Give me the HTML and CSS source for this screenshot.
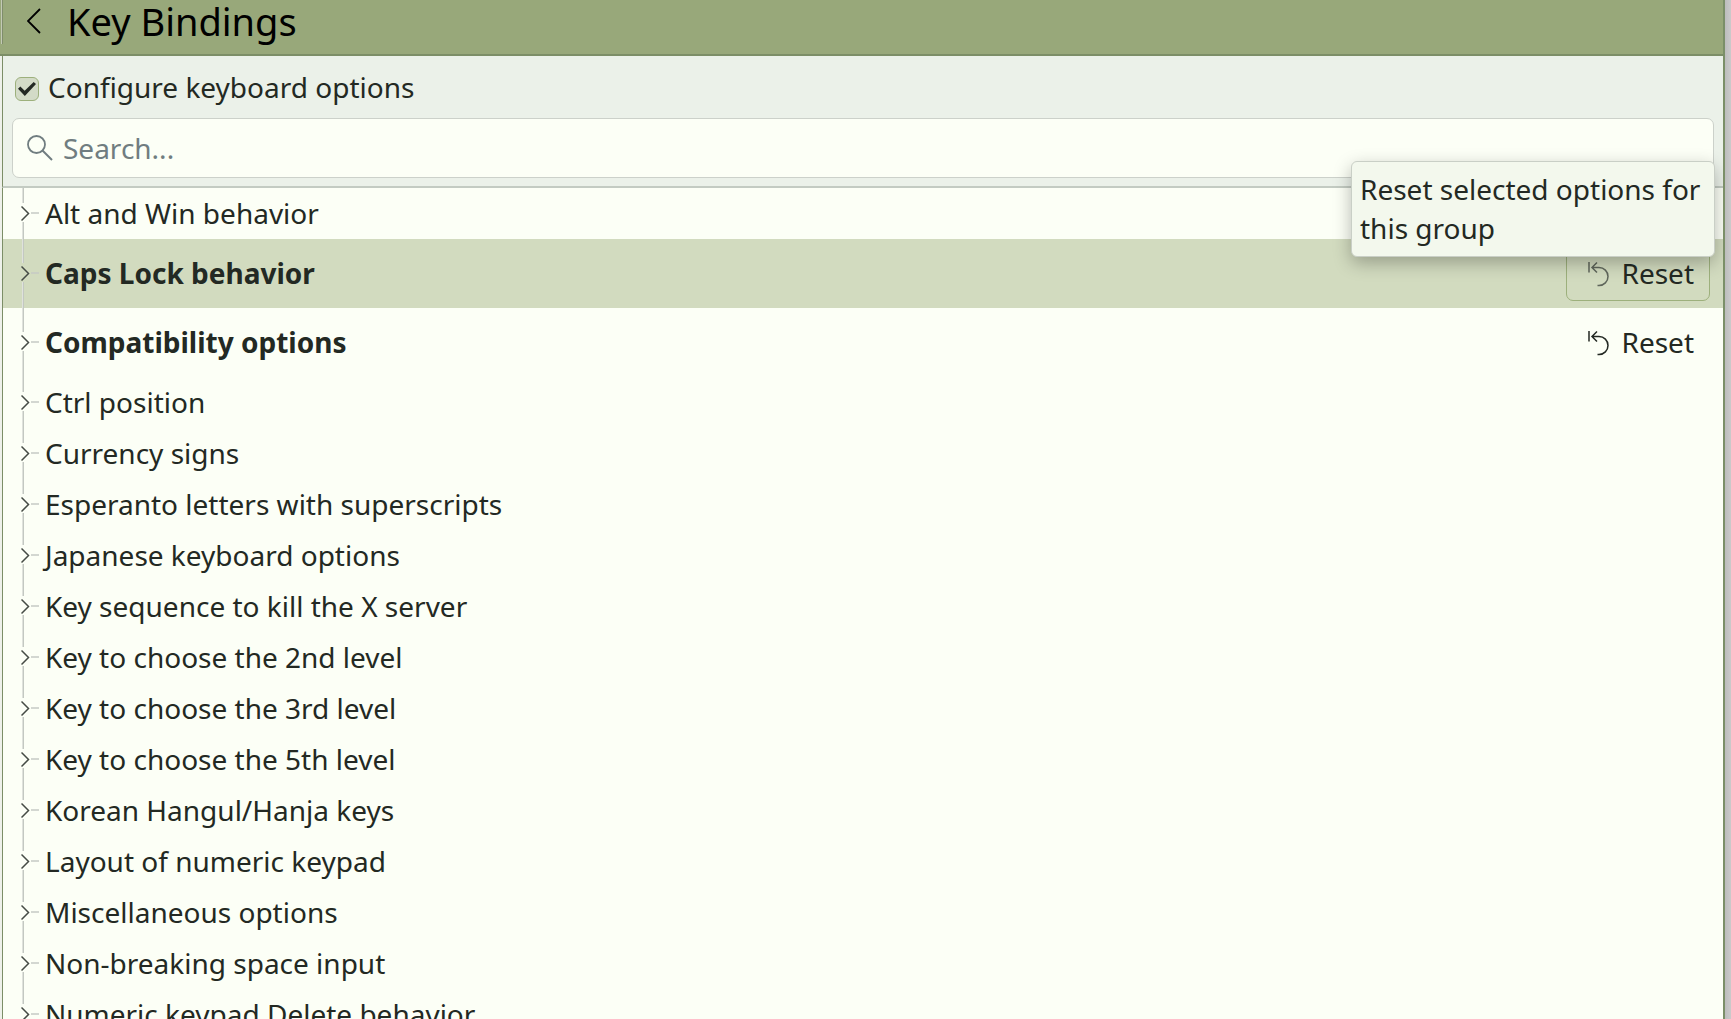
FILE: index.html
```html
<!DOCTYPE html>
<html lang="en">
<head>
<meta charset="utf-8">
<title>Key Bindings</title>
<link rel="stylesheet" href="styles.css">
</head>
<body>
<svg class="defs" aria-hidden="true">
  <symbol id="branch" viewBox="0 0 18 19">
    <path d="M0.5 3.5 L7.5 10.5 L0.5 17.5" fill="none" stroke="#454b45" stroke-width="1.500"/>
    <path d="M10 10 H18" stroke="#c6cac4" stroke-width="1.500"/>
  </symbol>
  <symbol id="undo" viewBox="0 0 22 26">
    <path d="M1 1 V11.500 M9 1.500 L4 6.500 L9 11.500 M4.500 6.500 H11 A9 9 0 0 1 11 24.500 H9.500" fill="none" stroke="currentColor" stroke-width="1.500"/>
  </symbol>
</svg>
<div class="window">
  <header class="titlebar">
    <button class="back" type="button" aria-label="Back">
      <svg width="14" height="26" viewBox="0 0 14 26"><path d="M13 1 L1 13 L13 25" fill="none" stroke="#000" stroke-width="1.800"/></svg>
    </button>
    <h1 class="title">Key Bindings</h1>
  </header>
  <div class="toolbar">
    <label class="option"><input class="check" type="checkbox" checked>Configure keyboard options</label>
    <div class="search">
      <svg width="26" height="26" viewBox="0 0 26 26"><circle cx="9.500" cy="9.500" r="8.500" fill="none" stroke="#707d80" stroke-width="1.800"/><path d="M15.500 15.500 L25 25" stroke="#707d80" stroke-width="2"/></svg>
      <input class="search-input" type="text" placeholder="Search..." aria-label="Search">
    </div>
  </div>
  <main class="content">
    <ul class="tree">
      <li class="row"><button class="expander" type="button" aria-label="Expand"><svg width="18" height="19"><use href="#branch"/></svg></button>Alt and Win behavior</li>
      <li class="row changed selected"><button class="expander" type="button" aria-label="Expand"><svg width="18" height="19"><use href="#branch"/></svg></button>Caps Lock behavior
        <div class="actions">
          <button class="reset hovered" type="button" aria-describedby="reset-tip"><svg width="22" height="26"><use href="#undo"/></svg>Reset</button>
          <div class="tooltip" id="reset-tip" role="tooltip">Reset selected options for this group</div>
        </div>
      </li>
      <li class="row changed"><button class="expander" type="button" aria-label="Expand"><svg width="18" height="19"><use href="#branch"/></svg></button>Compatibility options
        <div class="actions">
          <button class="reset" type="button"><svg width="22" height="26"><use href="#undo"/></svg>Reset</button>
        </div>
      </li>
      <li class="row"><button class="expander" type="button" aria-label="Expand"><svg width="18" height="19"><use href="#branch"/></svg></button>Ctrl position</li>
      <li class="row"><button class="expander" type="button" aria-label="Expand"><svg width="18" height="19"><use href="#branch"/></svg></button>Currency signs</li>
      <li class="row"><button class="expander" type="button" aria-label="Expand"><svg width="18" height="19"><use href="#branch"/></svg></button>Esperanto letters with superscripts</li>
      <li class="row"><button class="expander" type="button" aria-label="Expand"><svg width="18" height="19"><use href="#branch"/></svg></button>Japanese keyboard options</li>
      <li class="row"><button class="expander" type="button" aria-label="Expand"><svg width="18" height="19"><use href="#branch"/></svg></button>Key sequence to kill the X server</li>
      <li class="row"><button class="expander" type="button" aria-label="Expand"><svg width="18" height="19"><use href="#branch"/></svg></button>Key to choose the 2nd level</li>
      <li class="row"><button class="expander" type="button" aria-label="Expand"><svg width="18" height="19"><use href="#branch"/></svg></button>Key to choose the 3rd level</li>
      <li class="row"><button class="expander" type="button" aria-label="Expand"><svg width="18" height="19"><use href="#branch"/></svg></button>Key to choose the 5th level</li>
      <li class="row"><button class="expander" type="button" aria-label="Expand"><svg width="18" height="19"><use href="#branch"/></svg></button>Korean Hangul/Hanja keys</li>
      <li class="row"><button class="expander" type="button" aria-label="Expand"><svg width="18" height="19"><use href="#branch"/></svg></button>Layout of numeric keypad</li>
      <li class="row"><button class="expander" type="button" aria-label="Expand"><svg width="18" height="19"><use href="#branch"/></svg></button>Miscellaneous options</li>
      <li class="row"><button class="expander" type="button" aria-label="Expand"><svg width="18" height="19"><use href="#branch"/></svg></button>Non-breaking space input</li>
      <li class="row"><button class="expander" type="button" aria-label="Expand"><svg width="18" height="19"><use href="#branch"/></svg></button>Numeric keypad Delete behavior</li>
    </ul>
  </main>
</div>
</body>
</html>
```
FILE: styles.css
```css
* { box-sizing: border-box; }

body {
  margin: 0;
  height: 100vh;
  overflow: hidden;
  display: flex;
  padding-right: 6px;
  background: linear-gradient(to left, #cacaca, #bdbdbd 6px);
  color: #232923;
  font: 28px/39px "Noto Sans", sans-serif;
}

button, input { font: inherit; color: inherit; }
button { background: none; border: 0; padding: 0; }
svg { display: block; flex: none; }
.defs { position: absolute; width: 0; height: 0; }

.window {
  flex: 1;
  height: 100%;
  overflow: hidden;
  border-right: 2px solid #7b8f68;
  background: #eef1ea;
}

.titlebar {
  display: flex;
  align-items: center;
  gap: 26px;
  padding: 1px 27px 13px;
  background:
    linear-gradient(to right, #c3cab5 1px, #7f8c6c 1px) 1px 0 / 2px 44px no-repeat,
    #98a87a;
  border-bottom: 2px solid #7c8e67;
}
.title { margin: 0; font-size: 38px; line-height: 40px; font-weight: 400; color: #000; }

.toolbar, .content { margin-left: 2px; border-left: 1px solid #7c8e67; }

.toolbar {
  display: flex;
  flex-direction: column;
  gap: 11px;
  padding: 12px 9px 8px;
  border-bottom: 2px solid #c3cbc2;
  background: #ebf1e9;
}
.option { display: flex; align-items: center; gap: 9px; padding-left: 3px; }

.check {
  appearance: none;
  width: 24px;
  height: 24px;
  margin: 3px 0 0;
  border: 1px solid #9db07c;
  border-radius: 6px;
  background: #d3dbc7;
  display: grid;
  place-items: center;
}
.check:checked::before {
  content: "";
  width: 18px;
  height: 14px;
  background: #232923;
  clip-path: polygon(0 48%, 13% 32%, 37% 62%, 87% 0, 100% 14%, 38% 100%);
}

.search {
  display: flex;
  align-items: center;
  gap: 10px;
  height: 60px;
  padding: 0 14px;
  border: 1px solid #ccd1ca;
  border-radius: 7px;
  background: #fcfff6;
}
.search-input { flex: 1; min-width: 0; border: 0; padding: 0; background: none; outline: 0; }
.search-input::placeholder { color: #707d80; opacity: 1; }

.content { background: #fcfff6; }
.tree { margin: 0; padding: 0; list-style: none; }
.row { display: flex; align-items: center; height: 51px; padding-right: 13px; }
.row.changed { height: 69px; font-weight: 700; }
.row.selected { background: #d2dbbf; }

/* Branch line above and below each arrow */
.expander {
  align-self: stretch;
  width: 42px;
  padding-left: 18px;
  display: flex;
  flex-direction: column;
}
.expander::before, .expander::after {
  content: "";
  width: 2px;
  margin-left: 1px;
  background: linear-gradient(to right, #dfe2dc 1px, #c3c8c1 1px);
  flex: 1 1 0px;
}
.expander::after { flex-basis: 2px; }

.actions { position: relative; margin-left: auto; font-weight: 400; }
.reset {
  display: flex;
  align-items: center;
  gap: 11px;
  height: 55px;
  padding: 0 15px 0 21px;
  border: 1px solid transparent;
  border-radius: 7px;
}
.reset.hovered { border-color: #9db07c; }
.reset.hovered svg { color: #5f665b; }

.tooltip {
  position: absolute;
  z-index: 1;
  right: -5px;
  bottom: 44px;
  width: 364px;
  padding: 8px;
  border: 1px solid #c9cfc6;
  border-radius: 6px;
  background: #f3f8ed;
  box-shadow: 0 6px 18px rgba(0, 0, 0, 0.28);
}
```
